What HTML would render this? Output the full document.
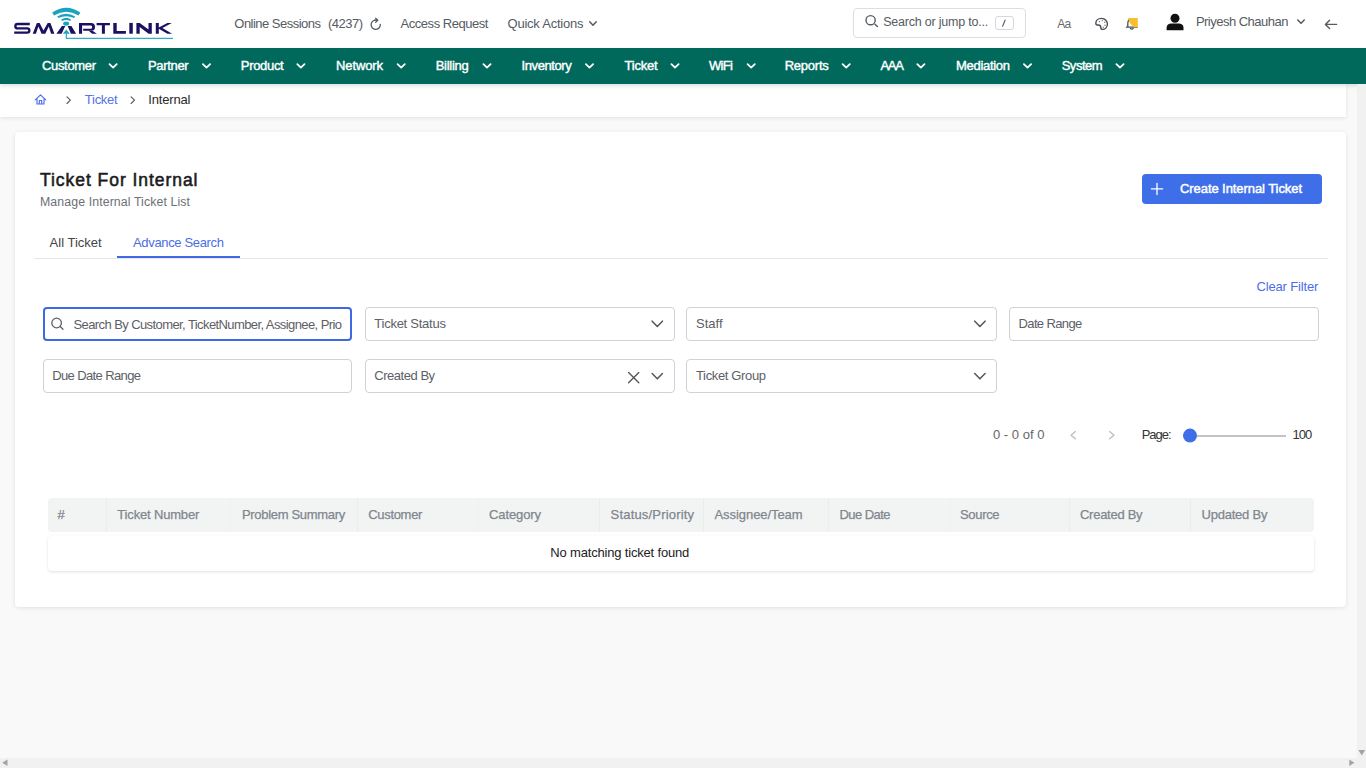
<!DOCTYPE html>
<html><head><meta charset="utf-8"><title>Ticket For Internal</title>
<style>
html,body{margin:0;padding:0;width:1366px;height:768px;overflow:hidden;background:#f9f9f9}
body{position:relative;font-family:"Liberation Sans",sans-serif}
.t{position:absolute;line-height:1;white-space:nowrap}
</style></head><body>
<div style="position:absolute;left:0.00px;top:0.00px;width:1366.00px;height:768.00px;background:#f9f9f9"></div>
<div style="position:absolute;left:0.00px;top:0.00px;width:1366.00px;height:48.00px;background:#fff"></div>
<svg style="position:absolute;left:0;top:0" width="200" height="48" viewBox="0 0 200 48">
<path d="M29.8 23.95 H17.6 Q15.35 23.95 15.35 26.15 Q15.35 28.35 17.6 28.35 H27.1 Q29.35 28.35 29.35 30.5 Q29.35 32.65 27.1 32.65 H14.2" fill="none" stroke="#1b1160" stroke-width="2.35"/>
<g fill="#1b1160">
<path d="M32.7 33.8 L36.9 22.9 H39.6 L43.5 30.4 L47.7 22.9 H50.4 L54.4 33.8 H51.1 L48.76 26.4 L45.3 33.8 H41.6 L38.41 26.4 L35.9 33.8 Z"/>
<path d="M56.4 33.8 L61.9 26 H65.3 L61.6 33.8 Z"/>
<path d="M76.1 33.8 L71.4 26 H67.7 L70.9 33.8 Z"/>
<path d="M79 22.95 H91.2 Q95 22.95 95 26.9 Q95 30.75 91.2 30.75 H83.2 V28.85 H91 Q92.1 28.85 92.1 26.9 Q92.1 25.4 91 25.4 H82.1 V33.8 H79 Z"/>
<path d="M88.6 30.75 H92.5 L96.8 33.8 H92.2 Z"/>
<path d="M96.6 23 H109.9 V25.3 H104.9 V33.8 H101.9 V25.3 H96.6 Z"/>
<path d="M113.3 22.95 H116.7 V31.1 H125.9 V33.8 H113.3 Z"/>
<path d="M129.3 22.9 H132.8 V33.7 H129.3 Z"/>
<path d="M136.4 22.9 H139.7 L148.5 29.6 V22.9 H151.8 V33.7 H148.6 L139.7 27 V33.7 H136.4 Z"/>
<path d="M155.8 22.9 H158.8 V27.6 L167.4 22.9 H171.8 L162.4 28.1 L172.1 33.7 H167.4 L158.8 28.8 V33.7 H155.8 Z"/>
</g>
<g fill="#1aa3bf">
<path d="M62.8 33.8 L66.3 29.5 L69.8 33.8 Z"/>
<ellipse cx="66.1" cy="23.6" rx="3" ry="2.2"/>
<path d="M52.2 12.6 Q66.3 2.9 80.3 12.6 L78.6 15.4 Q66.3 8 54 15.4 Z"/>
<path d="M57.1 16.4 Q66.2 11.2 75.2 16.4 L74 18.1 Q66.2 14.5 58.4 18.1 Z"/>
<path d="M61.1 19.8 Q66.2 15.8 71.2 19.8 L70.2 21 Q66.2 18.8 62.2 21 Z"/>
</g>
<path d="M66.4 33.5 V38.3 H173" fill="none" stroke="#36adc6" stroke-width="1.3"/>
</svg>
<div class="t" style="left:234.30px;top:17.00px;font-size:13.00px;color:#555b62;letter-spacing:-0.517px;">Online Sessions</div>
<div class="t" style="left:328.00px;top:17.00px;font-size:13.00px;color:#555b62;letter-spacing:-0.515px;">(4237)</div>
<svg style="position:absolute;left:0;top:0;overflow:visible" width="1" height="1"><path d="M375.6 20.2 A4.6 4.6 0 1 0 380.3 24.3" fill="none" stroke="#555b62" stroke-width="1.30" stroke-linecap="round" stroke-linejoin="round" /></svg>
<svg style="position:absolute;left:0;top:0;overflow:visible" width="1" height="1"><path d="M374.6 20.2 H377.8 M375.6 18.1 L377.8 20.2 L375.6 22.4" fill="none" stroke="#555b62" stroke-width="1.30" stroke-linecap="round" stroke-linejoin="round" /></svg>
<div class="t" style="left:400.60px;top:17.00px;font-size:13.00px;color:#555b62;letter-spacing:-0.471px;">Access Request</div>
<div class="t" style="left:507.50px;top:17.00px;font-size:13.00px;color:#555b62;letter-spacing:-0.229px;">Quick Actions</div>
<svg style="position:absolute;left:0;top:0;overflow:visible" width="1" height="1"><path d="M589.75 21.75 L593.00 25.25 L596.25 21.75" fill="none" stroke="#555b62" stroke-width="1.50" stroke-linecap="round" stroke-linejoin="round"/></svg>
<div style="position:absolute;left:852.50px;top:8.00px;width:173.50px;height:30.00px;box-sizing:border-box;border:1px solid #dcdee3;border-radius:4px;background:#fff"></div>
<svg style="position:absolute;left:0;top:0;overflow:visible" width="1" height="1"><path d="M875 24.2 L877.4 26.5" fill="none" stroke="#555b62" stroke-width="1.40" stroke-linecap="round" stroke-linejoin="round" /></svg>
<svg style="position:absolute;left:0;top:0;overflow:visible" width="1" height="1"><circle cx="870.6" cy="20.2" r="4.6" fill="none" stroke="#555b62" stroke-width="1.4"/></svg>
<div class="t" style="left:883.20px;top:16.00px;font-size:12.50px;color:#555b62;letter-spacing:-0.214px;">Search or jump to...</div>
<div style="position:absolute;left:994.50px;top:15.80px;width:19.00px;height:14.60px;box-sizing:border-box;border:1px solid #d5d7dc;border-radius:3px"></div>
<svg style="position:absolute;left:0;top:0;overflow:visible" width="1" height="1"><path d="M1002.6 26.2 L1005.2 20" fill="none" stroke="#555b62" stroke-width="1.10" stroke-linecap="round" stroke-linejoin="round" /></svg>
<div class="t" style="left:1057.30px;top:18.00px;font-size:12.00px;color:#6b6b6b;letter-spacing:-0.678px;">Aa</div>
<svg style="position:absolute;left:0;top:0;overflow:visible" width="1" height="1"><path d="M1101.5 18.4 C1105.3 18.4 1107.4 21.2 1107.4 24 C1107.4 27.4 1105 29.4 1102.6 29.4 C1101.2 29.4 1100.8 28.4 1100.8 27.4 C1100.8 25.9 1099.8 25 1098.4 25 C1097.2 25 1095.8 24.8 1095.8 23.4 C1095.8 20.6 1098.2 18.4 1101.5 18.4 Z" fill="none" stroke="#4a4f55" stroke-width="1.40" stroke-linecap="round" stroke-linejoin="round" /></svg>
<svg style="position:absolute;left:0;top:0;overflow:visible" width="1" height="1"><circle cx="1099.4" cy="21.6" r="0.6" fill="#4a4f55"/></svg>
<svg style="position:absolute;left:0;top:0;overflow:visible" width="1" height="1"><circle cx="1102.2" cy="20.6" r="0.6" fill="#4a4f55"/></svg>
<svg style="position:absolute;left:0;top:0;overflow:visible" width="1" height="1"><circle cx="1104.8" cy="22.2" r="0.6" fill="#4a4f55"/></svg>
<svg style="position:absolute;left:0;top:0;overflow:visible" width="1" height="1"><circle cx="1105.0" cy="25.2" r="0.6" fill="#4a4f55"/></svg>
<svg style="position:absolute;left:0;top:0;overflow:visible" width="1" height="1"><circle cx="1103.2" cy="27.2" r="0.6" fill="#4a4f55"/></svg>
<svg style="position:absolute;left:0;top:0;overflow:visible" width="1" height="1"><path d="M1126.4 27.2 H1137.2 M1127.8 27.2 V23.4 C1127.8 20.4 1129.6 18.8 1131.8 18.8 C1134 18.8 1135.8 20.4 1135.8 23.4 V27.2 M1130.4 28.6 Q1131.8 29.8 1133.2 28.6" fill="none" stroke="#4a4f55" stroke-width="1.30" stroke-linecap="round" stroke-linejoin="round" /></svg>
<svg style="position:absolute;left:0;top:0;overflow:visible" width="1" height="1"><path d="M1128.3 18 H1137.8 V27.2 H1134.4 Q1131.2 25.8 1129.6 22.6 Q1128.3 20.2 1128.3 18 Z" fill="#f9be2c" stroke="none" stroke-width="0.00" stroke-linecap="round" stroke-linejoin="round" /></svg>
<svg style="position:absolute;left:0;top:0;overflow:visible" width="1" height="1"><circle cx="1175" cy="18.2" r="4.5" fill="#111"/><path d="M1166.6 30.3 V27.8 C1166.6 25 1168.8 23.6 1171.4 23.6 H1178.6 C1181.3 23.6 1183.5 25 1183.5 27.8 V30.3 Z" fill="#111"/></svg>
<div class="t" style="left:1195.90px;top:15.00px;font-size:13.00px;color:#555b62;letter-spacing:-0.516px;">Priyesh Chauhan</div>
<svg style="position:absolute;left:0;top:0;overflow:visible" width="1" height="1"><path d="M1297.75 19.95 L1301.00 23.25 L1304.25 19.95" fill="none" stroke="#555b62" stroke-width="1.50" stroke-linecap="round" stroke-linejoin="round"/></svg>
<svg style="position:absolute;left:0;top:0;overflow:visible" width="1" height="1"><path d="M1336.6 24.4 H1325.4 M1329.6 20.2 L1325.4 24.4 L1329.6 28.6" fill="none" stroke="#555b62" stroke-width="1.40" stroke-linecap="round" stroke-linejoin="round" /></svg>
<div style="position:absolute;left:0.00px;top:84.00px;width:1346.00px;height:33.00px;background:#fff;box-shadow:0 1px 4px rgba(0,0,0,0.10)"></div>
<div style="position:absolute;left:0.00px;top:48.00px;width:1366.00px;height:36.00px;background:#00695c;box-shadow:0 2px 4px rgba(0,0,0,0.12)"></div>
<div class="t" style="left:42.00px;top:59.00px;font-size:13.00px;color:#ffffff;letter-spacing:-0.335px;-webkit-text-stroke:0.4px #fff;">Customer</div>
<svg style="position:absolute;left:0;top:0;overflow:visible" width="1" height="1"><path d="M109.50 64.10 L113.10 67.60 L116.70 64.10" fill="none" stroke="#ffffff" stroke-width="1.80" stroke-linecap="round" stroke-linejoin="round"/></svg>
<div class="t" style="left:148.00px;top:59.00px;font-size:13.00px;color:#ffffff;letter-spacing:-0.338px;-webkit-text-stroke:0.4px #fff;">Partner</div>
<svg style="position:absolute;left:0;top:0;overflow:visible" width="1" height="1"><path d="M202.90 64.10 L206.50 67.60 L210.10 64.10" fill="none" stroke="#ffffff" stroke-width="1.80" stroke-linecap="round" stroke-linejoin="round"/></svg>
<div class="t" style="left:240.80px;top:59.00px;font-size:13.00px;color:#ffffff;letter-spacing:-0.317px;-webkit-text-stroke:0.4px #fff;">Product</div>
<svg style="position:absolute;left:0;top:0;overflow:visible" width="1" height="1"><path d="M297.30 64.10 L300.90 67.60 L304.50 64.10" fill="none" stroke="#ffffff" stroke-width="1.80" stroke-linecap="round" stroke-linejoin="round"/></svg>
<div class="t" style="left:336.00px;top:59.00px;font-size:13.00px;color:#ffffff;letter-spacing:-0.113px;-webkit-text-stroke:0.4px #fff;">Network</div>
<svg style="position:absolute;left:0;top:0;overflow:visible" width="1" height="1"><path d="M397.60 64.10 L401.20 67.60 L404.80 64.10" fill="none" stroke="#ffffff" stroke-width="1.80" stroke-linecap="round" stroke-linejoin="round"/></svg>
<div class="t" style="left:435.70px;top:59.00px;font-size:13.00px;color:#ffffff;letter-spacing:-0.264px;-webkit-text-stroke:0.4px #fff;">Billing</div>
<svg style="position:absolute;left:0;top:0;overflow:visible" width="1" height="1"><path d="M483.40 64.10 L487.00 67.60 L490.60 64.10" fill="none" stroke="#ffffff" stroke-width="1.80" stroke-linecap="round" stroke-linejoin="round"/></svg>
<div class="t" style="left:521.50px;top:59.00px;font-size:13.00px;color:#ffffff;letter-spacing:-0.396px;-webkit-text-stroke:0.4px #fff;">Inventory</div>
<svg style="position:absolute;left:0;top:0;overflow:visible" width="1" height="1"><path d="M585.90 64.10 L589.50 67.60 L593.10 64.10" fill="none" stroke="#ffffff" stroke-width="1.80" stroke-linecap="round" stroke-linejoin="round"/></svg>
<div class="t" style="left:624.50px;top:59.00px;font-size:13.00px;color:#ffffff;letter-spacing:-0.218px;-webkit-text-stroke:0.4px #fff;">Ticket</div>
<svg style="position:absolute;left:0;top:0;overflow:visible" width="1" height="1"><path d="M671.40 64.10 L675.00 67.60 L678.60 64.10" fill="none" stroke="#ffffff" stroke-width="1.80" stroke-linecap="round" stroke-linejoin="round"/></svg>
<div class="t" style="left:709.00px;top:59.00px;font-size:13.00px;color:#ffffff;letter-spacing:-0.663px;-webkit-text-stroke:0.4px #fff;">WiFi</div>
<svg style="position:absolute;left:0;top:0;overflow:visible" width="1" height="1"><path d="M747.60 64.10 L751.20 67.60 L754.80 64.10" fill="none" stroke="#ffffff" stroke-width="1.80" stroke-linecap="round" stroke-linejoin="round"/></svg>
<div class="t" style="left:784.70px;top:59.00px;font-size:13.00px;color:#ffffff;letter-spacing:-0.236px;-webkit-text-stroke:0.4px #fff;">Reports</div>
<svg style="position:absolute;left:0;top:0;overflow:visible" width="1" height="1"><path d="M842.60 64.10 L846.20 67.60 L849.80 64.10" fill="none" stroke="#ffffff" stroke-width="1.80" stroke-linecap="round" stroke-linejoin="round"/></svg>
<div class="t" style="left:880.40px;top:59.00px;font-size:13.00px;color:#ffffff;letter-spacing:-1.257px;-webkit-text-stroke:0.4px #fff;">AAA</div>
<svg style="position:absolute;left:0;top:0;overflow:visible" width="1" height="1"><path d="M917.30 64.10 L920.90 67.60 L924.50 64.10" fill="none" stroke="#ffffff" stroke-width="1.80" stroke-linecap="round" stroke-linejoin="round"/></svg>
<div class="t" style="left:956.00px;top:59.00px;font-size:13.00px;color:#ffffff;letter-spacing:-0.295px;-webkit-text-stroke:0.4px #fff;">Mediation</div>
<svg style="position:absolute;left:0;top:0;overflow:visible" width="1" height="1"><path d="M1023.90 64.10 L1027.50 67.60 L1031.10 64.10" fill="none" stroke="#ffffff" stroke-width="1.80" stroke-linecap="round" stroke-linejoin="round"/></svg>
<div class="t" style="left:1061.70px;top:59.00px;font-size:13.00px;color:#ffffff;letter-spacing:-0.488px;-webkit-text-stroke:0.4px #fff;">System</div>
<svg style="position:absolute;left:0;top:0;overflow:visible" width="1" height="1"><path d="M1116.40 64.10 L1120.00 67.60 L1123.60 64.10" fill="none" stroke="#ffffff" stroke-width="1.80" stroke-linecap="round" stroke-linejoin="round"/></svg>
<svg style="position:absolute;left:0;top:0;overflow:visible" width="1" height="1"><path d="M35.3 99.8 L40.5 94.9 L45.7 99.8 M37 98.3 V104 H44 V98.3 M39.3 104 V100.5 H41.7 V104" fill="none" stroke="#4a6cf0" stroke-width="1.15" stroke-linecap="round" stroke-linejoin="round" /></svg>
<svg style="position:absolute;left:0;top:0;overflow:visible" width="1" height="1"><path d="M67 96.9 L70.4 100.2 L67 103.5" fill="none" stroke="#5a5a5a" stroke-width="1.15" stroke-linecap="round" stroke-linejoin="round" /></svg>
<div class="t" style="left:84.80px;top:93.00px;font-size:13.00px;color:#5373e6;letter-spacing:-0.258px;">Ticket</div>
<svg style="position:absolute;left:0;top:0;overflow:visible" width="1" height="1"><path d="M131.1 96.9 L134.5 100.2 L131.1 103.5" fill="none" stroke="#5a5a5a" stroke-width="1.15" stroke-linecap="round" stroke-linejoin="round" /></svg>
<div class="t" style="left:148.20px;top:93.00px;font-size:13.00px;color:#2a2a2a;letter-spacing:-0.151px;">Internal</div>
<div style="position:absolute;left:1357.00px;top:84.00px;width:9.00px;height:674.00px;background:#f1f1f1"></div>
<div style="position:absolute;left:0.00px;top:758.00px;width:1366.00px;height:10.00px;background:#f1f1f1"></div>
<svg style="position:absolute;left:0;top:0;overflow:visible" width="1" height="1"><path d="M1358.4 750 L1365.2 750 L1361.8 755.6 Z" fill="#a3a3a3" stroke="none" stroke-width="0.00" stroke-linecap="round" stroke-linejoin="round" /></svg>
<svg style="position:absolute;left:0;top:0;overflow:visible" width="1" height="1"><path d="M1349.3 759.6 V766 L1354.4 762.8 Z" fill="#a3a3a3" stroke="none" stroke-width="0.00" stroke-linecap="round" stroke-linejoin="round" /></svg>
<svg style="position:absolute;left:0;top:0;overflow:visible" width="1" height="1"><path d="M7.5 759.4 V766 L2.2 762.7 Z" fill="#a3a3a3" stroke="none" stroke-width="0.00" stroke-linecap="round" stroke-linejoin="round" /></svg>
<div style="position:absolute;left:15.00px;top:132.00px;width:1331.00px;height:475.00px;background:#fff;border-radius:4px;box-shadow:0 1px 4px rgba(0,0,0,0.10)"></div>
<div class="t" style="left:40.00px;top:172.00px;font-size:17.50px;color:#1b1b1b;letter-spacing:0.952px;-webkit-text-stroke:0.55px #1b1b1b;">Ticket For Internal</div>
<div class="t" style="left:40.00px;top:196.00px;font-size:12.30px;color:#6b7075;letter-spacing:0.116px;">Manage Internal Ticket List</div>
<div class="t" style="left:49.60px;top:236.00px;font-size:13.00px;color:#444;letter-spacing:0.010px;">All Ticket</div>
<div class="t" style="left:133.00px;top:236.00px;font-size:13.00px;color:#4a6ee6;letter-spacing:-0.338px;">Advance Search</div>
<div style="position:absolute;left:34.00px;top:258.00px;width:1294.00px;height:1.00px;background:#e6e6e6"></div>
<div style="position:absolute;left:117.30px;top:256.00px;width:122.40px;height:2.00px;background:#4169e1"></div>
<div style="position:absolute;left:1142.00px;top:174.00px;width:180.00px;height:30.00px;background:#3f6ee9;border-radius:4px"></div>
<svg style="position:absolute;left:0;top:0;overflow:visible" width="1" height="1"><path d="M1157 183.3 V194.5 M1151.4 188.9 H1162.6" fill="none" stroke="#fff" stroke-width="1.30" stroke-linecap="round" stroke-linejoin="round" /></svg>
<div class="t" style="left:1180.00px;top:182.00px;font-size:13.00px;color:#fff;letter-spacing:-0.074px;-webkit-text-stroke:0.45px #fff;">Create Internal Ticket</div>
<div class="t" style="left:1256.50px;top:280.00px;font-size:13.00px;color:#4a6ee6;letter-spacing:-0.160px;">Clear Filter</div>
<div style="position:absolute;left:43.00px;top:307.00px;width:309.00px;height:34.00px;box-sizing:border-box;border:2px solid #3d68e6;border-radius:4px;background:#fff"></div>
<svg style="position:absolute;left:0;top:0;overflow:visible" width="1" height="1"><circle cx="56.6" cy="323" r="4.8" fill="none" stroke="#5c6066" stroke-width="1.3"/></svg>
<svg style="position:absolute;left:0;top:0;overflow:visible" width="1" height="1"><path d="M60.2 326.6 L63 329.2" fill="none" stroke="#5c6066" stroke-width="1.30" stroke-linecap="round" stroke-linejoin="round" /></svg>
<div class="t" style="left:73.50px;top:318.00px;font-size:13.00px;color:#5c6066;letter-spacing:-0.590px;">Search By Customer, TicketNumber, Assignee, Prio</div>
<div style="position:absolute;left:365.00px;top:307.00px;width:310.00px;height:34.00px;box-sizing:border-box;border:1px solid #cfd2d8;border-radius:4px;background:#fff"></div>
<div class="t" style="left:374.30px;top:317.00px;font-size:13.00px;color:#5c6066;letter-spacing:-0.254px;">Ticket Status</div>
<svg style="position:absolute;left:0;top:0;overflow:visible" width="1" height="1"><path d="M652.15 321.15 L657.30 326.45 L662.45 321.15" fill="none" stroke="#555" stroke-width="1.50" stroke-linecap="round" stroke-linejoin="round"/></svg>
<div style="position:absolute;left:686.00px;top:307.00px;width:311.00px;height:34.00px;box-sizing:border-box;border:1px solid #cfd2d8;border-radius:4px;background:#fff"></div>
<div class="t" style="left:696.00px;top:317.00px;font-size:13.00px;color:#5c6066;letter-spacing:0.000px;">Staff</div>
<svg style="position:absolute;left:0;top:0;overflow:visible" width="1" height="1"><path d="M974.75 321.15 L979.90 326.45 L985.05 321.15" fill="none" stroke="#555" stroke-width="1.50" stroke-linecap="round" stroke-linejoin="round"/></svg>
<div style="position:absolute;left:1009.00px;top:307.00px;width:309.50px;height:34.00px;box-sizing:border-box;border:1px solid #cfd2d8;border-radius:4px;background:#fff"></div>
<div class="t" style="left:1018.50px;top:317.00px;font-size:13.00px;color:#5c6066;letter-spacing:-0.619px;">Date Range</div>
<div style="position:absolute;left:43.00px;top:359.00px;width:309.00px;height:34.00px;box-sizing:border-box;border:1px solid #cfd2d8;border-radius:4px;background:#fff"></div>
<div class="t" style="left:52.20px;top:369.00px;font-size:13.00px;color:#5c6066;letter-spacing:-0.618px;">Due Date Range</div>
<div style="position:absolute;left:365.00px;top:359.00px;width:310.00px;height:34.00px;box-sizing:border-box;border:1px solid #cfd2d8;border-radius:4px;background:#fff"></div>
<div class="t" style="left:374.30px;top:369.00px;font-size:13.00px;color:#5c6066;letter-spacing:-0.470px;">Created By</div>
<svg style="position:absolute;left:0;top:0;overflow:visible" width="1" height="1"><path d="M628.6 372.6 L638.8 382.8 M638.8 372.6 L628.6 382.8" fill="none" stroke="#555" stroke-width="1.35" stroke-linecap="round" stroke-linejoin="round" /></svg>
<svg style="position:absolute;left:0;top:0;overflow:visible" width="1" height="1"><path d="M652.15 373.55 L657.30 378.85 L662.45 373.55" fill="none" stroke="#555" stroke-width="1.50" stroke-linecap="round" stroke-linejoin="round"/></svg>
<div style="position:absolute;left:686.00px;top:359.00px;width:311.00px;height:34.00px;box-sizing:border-box;border:1px solid #cfd2d8;border-radius:4px;background:#fff"></div>
<div class="t" style="left:696.00px;top:369.00px;font-size:13.00px;color:#5c6066;letter-spacing:-0.357px;">Ticket Group</div>
<svg style="position:absolute;left:0;top:0;overflow:visible" width="1" height="1"><path d="M974.75 373.55 L979.90 378.85 L985.05 373.55" fill="none" stroke="#555" stroke-width="1.50" stroke-linecap="round" stroke-linejoin="round"/></svg>
<div class="t" style="left:993.00px;top:428.00px;font-size:13.00px;color:#666;letter-spacing:0.011px;">0 - 0 of 0</div>
<svg style="position:absolute;left:0;top:0;overflow:visible" width="1" height="1"><path d="M1075.4 431.6 L1071 435.2 L1075.4 438.8" fill="none" stroke="#bdbdbd" stroke-width="1.30" stroke-linecap="round" stroke-linejoin="round" /></svg>
<svg style="position:absolute;left:0;top:0;overflow:visible" width="1" height="1"><path d="M1109.6 431.6 L1114 435.2 L1109.6 438.8" fill="none" stroke="#bdbdbd" stroke-width="1.30" stroke-linecap="round" stroke-linejoin="round" /></svg>
<div class="t" style="left:1141.70px;top:428.00px;font-size:13.00px;color:#333;letter-spacing:-0.993px;">Page:</div>
<div style="position:absolute;left:1190.00px;top:434.80px;width:96.00px;height:1.80px;background:#c4c4c4"></div>
<svg style="position:absolute;left:0;top:0;overflow:visible" width="1" height="1"><circle cx="1190" cy="435.6" r="7" fill="#3f6ee9"/></svg>
<div class="t" style="left:1292.50px;top:428.00px;font-size:13.00px;color:#333;letter-spacing:-0.944px;">100</div>
<div style="position:absolute;left:48.00px;top:498.00px;width:1266.00px;height:34.00px;background:#f2f4f4;border-radius:4px"></div>
<div style="position:absolute;left:106.00px;top:498.00px;width:1.00px;height:34.00px;background:#ebeded"></div>
<div style="position:absolute;left:357.00px;top:498.00px;width:1.00px;height:34.00px;background:#ebeded"></div>
<div style="position:absolute;left:599.00px;top:498.00px;width:1.00px;height:34.00px;background:#ebeded"></div>
<div style="position:absolute;left:703.00px;top:498.00px;width:1.00px;height:34.00px;background:#ebeded"></div>
<div style="position:absolute;left:828.00px;top:498.00px;width:1.00px;height:34.00px;background:#ebeded"></div>
<div style="position:absolute;left:1069.00px;top:498.00px;width:1.00px;height:34.00px;background:#ebeded"></div>
<div style="position:absolute;left:1190.00px;top:498.00px;width:1.00px;height:34.00px;background:#ebeded"></div>
<div style="position:absolute;left:230.00px;top:498.00px;width:1.00px;height:34.00px;background:#eff1f1"></div>
<div style="position:absolute;left:478.00px;top:498.00px;width:1.00px;height:34.00px;background:#eff1f1"></div>
<div style="position:absolute;left:950.00px;top:498.00px;width:1.00px;height:34.00px;background:#eff1f1"></div>
<div class="t" style="left:57.40px;top:508.00px;font-size:13.00px;color:#80868d;-webkit-text-stroke:0.25px #80868d;">#</div>
<div class="t" style="left:117.30px;top:508.00px;font-size:13.00px;color:#80868d;letter-spacing:-0.169px;-webkit-text-stroke:0.25px #80868d;">Ticket Number</div>
<div class="t" style="left:242.00px;top:508.00px;font-size:13.00px;color:#80868d;letter-spacing:-0.317px;-webkit-text-stroke:0.25px #80868d;">Problem Summary</div>
<div class="t" style="left:368.20px;top:508.00px;font-size:13.00px;color:#80868d;letter-spacing:-0.306px;-webkit-text-stroke:0.25px #80868d;">Customer</div>
<div class="t" style="left:489.00px;top:508.00px;font-size:13.00px;color:#80868d;letter-spacing:-0.106px;-webkit-text-stroke:0.25px #80868d;">Category</div>
<div class="t" style="left:610.60px;top:508.00px;font-size:13.00px;color:#80868d;letter-spacing:0.178px;-webkit-text-stroke:0.25px #80868d;">Status/Priority</div>
<div class="t" style="left:714.50px;top:508.00px;font-size:13.00px;color:#80868d;letter-spacing:-0.065px;-webkit-text-stroke:0.25px #80868d;">Assignee/Team</div>
<div class="t" style="left:839.40px;top:508.00px;font-size:13.00px;color:#80868d;letter-spacing:-0.531px;-webkit-text-stroke:0.25px #80868d;">Due Date</div>
<div class="t" style="left:960.00px;top:508.00px;font-size:13.00px;color:#80868d;letter-spacing:-0.318px;-webkit-text-stroke:0.25px #80868d;">Source</div>
<div class="t" style="left:1080.00px;top:508.00px;font-size:13.00px;color:#80868d;letter-spacing:-0.270px;-webkit-text-stroke:0.25px #80868d;">Created By</div>
<div class="t" style="left:1201.60px;top:508.00px;font-size:13.00px;color:#80868d;letter-spacing:-0.237px;-webkit-text-stroke:0.25px #80868d;">Updated By</div>
<div style="position:absolute;left:48.00px;top:535.50px;width:1266.00px;height:35.00px;background:#fff;border-radius:4px;box-shadow:0 1px 3px rgba(0,0,0,0.12)"></div>
<div class="t" style="left:550.30px;top:546.00px;font-size:13.00px;color:#222;letter-spacing:-0.177px;">No matching ticket found</div>
</body></html>
